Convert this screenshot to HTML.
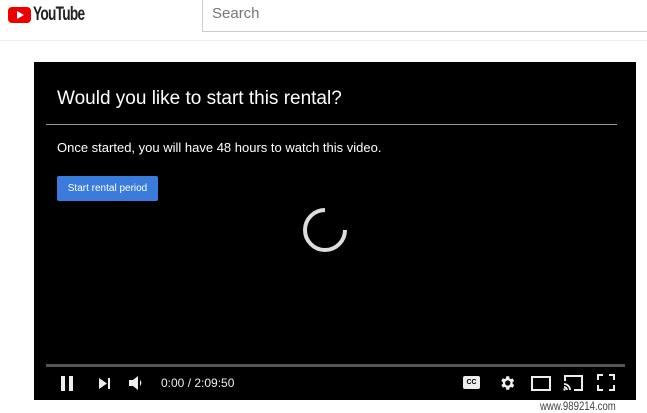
<!DOCTYPE html>
<html><head><style>
body{margin:0;width:647px;height:411px;background:#fff;position:relative;overflow:hidden;font-family:"Liberation Sans",sans-serif}
.a{position:absolute}
</style></head><body>
<div class="a" style="left:0;top:0;width:647px;height:40px;border-bottom:1px solid #eee"></div>
<div class="a" style="left:8px;top:7px;width:23px;height:16px;background:#e00;border-radius:4px"></div>
<div class="a" style="left:17px;top:11px;width:0;height:0;border-left:7px solid #fff;border-top:4px solid transparent;border-bottom:4px solid transparent"></div>
<div class="a" style="left:33px;top:4px;font-size:19px;font-weight:bold;letter-spacing:-1px;color:#222;transform:scaleX(.72);transform-origin:left">YouTube</div>
<div class="a" style="left:202px;top:-2px;width:460px;height:34px;border:1px solid #ccc;box-sizing:border-box"></div>
<div class="a" style="left:212px;top:5px;font-size:15px;color:#777">Search</div>
<div class="a" style="left:34px;top:62px;width:602px;height:338px;background:#000"></div>
<div class="a" style="left:57px;top:88px;font-size:19px;color:#fff">Would you like to start this rental?</div>
<div class="a" style="left:46px;top:124px;width:571px;height:1px;background:#999"></div>
<div class="a" style="left:57px;top:140px;font-size:13px;color:#fff">Once started, you will have 48 hours to watch this video.</div>
<div class="a" style="left:57px;top:176px;width:101px;height:25px;background:#3a7bdb;border-radius:2px;color:#fff;font-size:10px;line-height:25px;text-align:center">Start rental period</div>
<svg class="a" style="left:300px;top:205px" width="50" height="50"><path d="M25 5 A20 20 0 1 0 45 25" fill="none" stroke="#ddd" stroke-width="4"/></svg>
<div class="a" style="left:46px;top:364px;width:579px;height:3px;background:#555"></div>
<div class="a" style="left:61px;top:376px;width:4px;height:15px;background:#eee"></div>
<div class="a" style="left:69px;top:376px;width:4px;height:15px;background:#eee"></div>
<svg class="a" style="left:98px;top:377px" width="14" height="13"><path d="M1 1 L9 6.5 L1 12Z M10 1 h2 v11 h-2Z" fill="#eee"/></svg>
<svg class="a" style="left:128px;top:375px" width="16" height="16"><path d="M1 5 h4 l5-4 v14 l-5-4 h-4Z M12 5 a4 4 0 0 1 0 6Z" fill="#eee"/></svg>
<div class="a" style="left:161px;top:376px;font-size:12px;color:#eee">0:00 / 2:09:50</div>
<div class="a" style="left:463px;top:376px;width:17px;height:13px;background:#eee;border-radius:2px;font-size:7px;font-weight:bold;line-height:13px;text-align:center;color:#000">CC</div>
<svg class="a" style="left:498px;top:374px" width="18" height="18" viewBox="0 0 24 24"><path fill="#eee" d="M19.4 13a7.5 7.5 0 0 0 0-2l2.1-1.6-2-3.5-2.5 1a7 7 0 0 0-1.7-1L15 3h-4l-.4 2.7a7 7 0 0 0-1.7 1l-2.5-1-2 3.5L6.6 11a7.5 7.5 0 0 0 0 2l-2.1 1.6 2 3.5 2.5-1a7 7 0 0 0 1.7 1L11 21h4l.4-2.7a7 7 0 0 0 1.7-1l2.5 1 2-3.5zM13 15.5a3.5 3.5 0 1 1 0-7 3.5 3.5 0 0 1 0 7z"/></svg>
<div class="a" style="left:531px;top:376px;width:16px;height:11px;border:2px solid #eee"></div>
<svg class="a" style="left:562px;top:373px" width="22" height="18"><path d="M5 3 h15 v14 h-8 M3 8 v-5 h2" fill="none" stroke="#eee" stroke-width="2"/><path d="M2 11 a6 6 0 0 1 6 6 M2 14 a3 3 0 0 1 3 3" fill="none" stroke="#eee" stroke-width="1.8"/><circle cx="2.5" cy="16.5" r="1.2" fill="#eee"/></svg>
<svg class="a" style="left:597px;top:374px" width="18" height="17"><path d="M1 6 v-5 h5 M12 1 h5 v5 M17 11 v5 h-5 M6 16 h-5 v-5" fill="none" stroke="#eee" stroke-width="2"/></svg>
<div class="a" style="left:540px;top:399px;font-size:12px;color:#444;transform:scaleX(.8);transform-origin:left">www.989214.com</div>
</body></html>
